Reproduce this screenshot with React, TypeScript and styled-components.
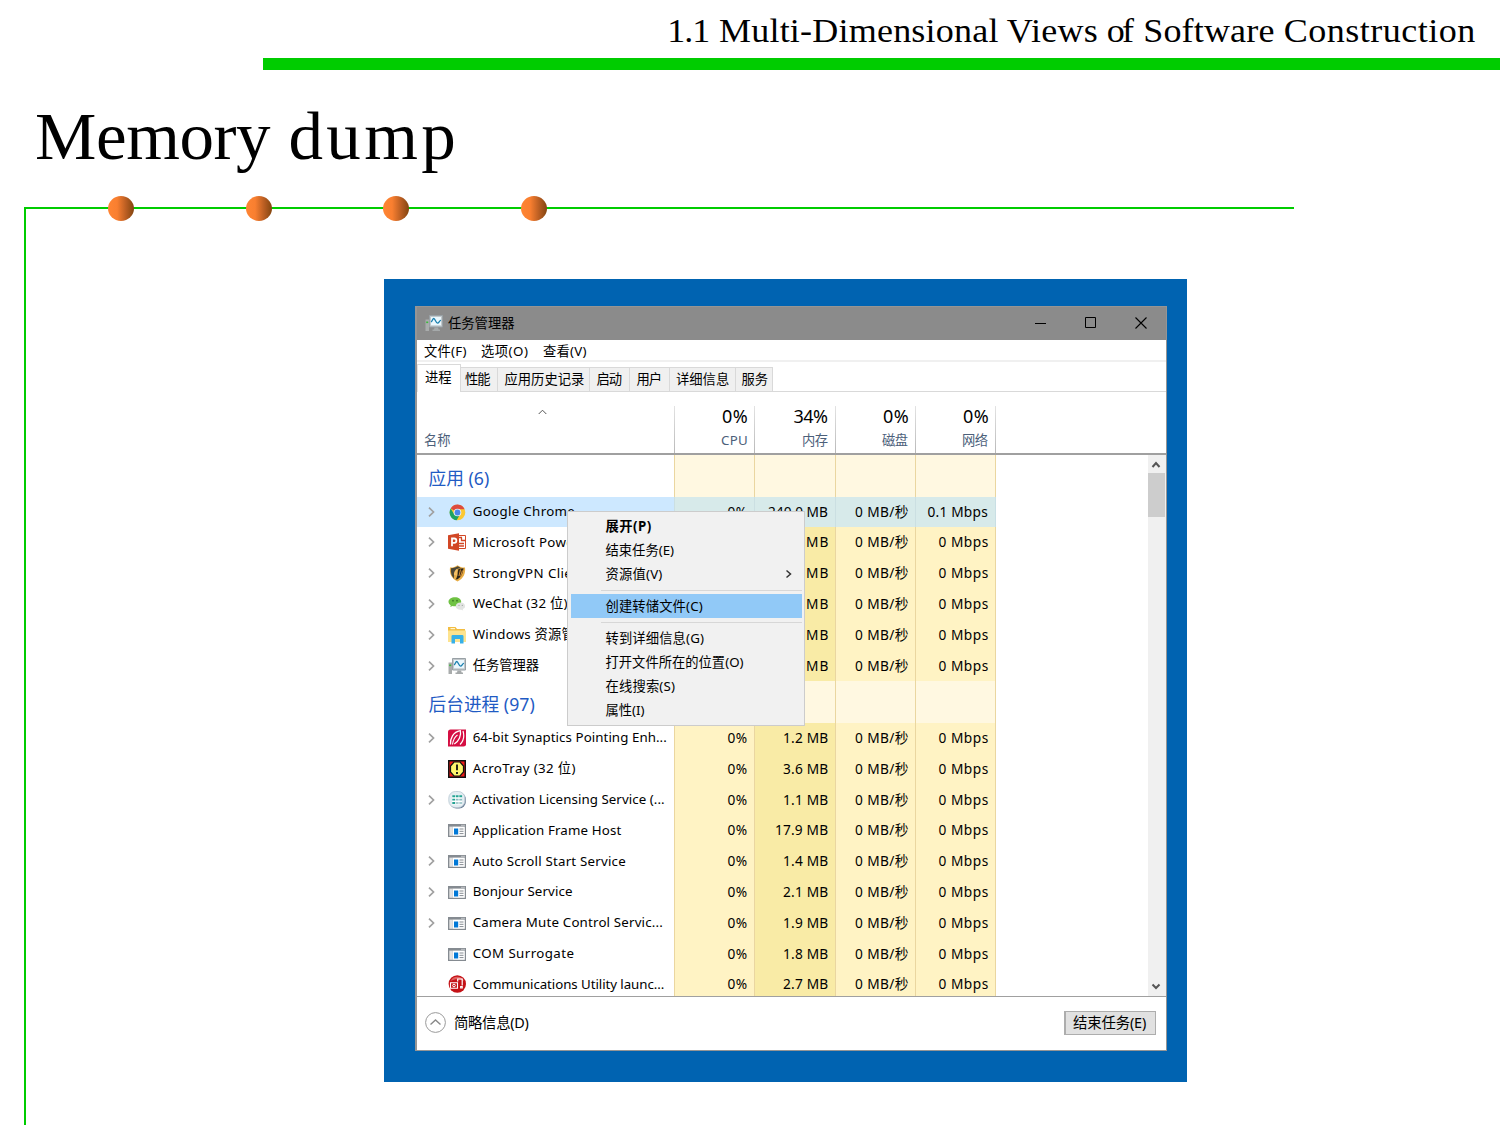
import React, { useLayoutEffect, useRef, useState } from 'react';
import styled, { createGlobalStyle, css } from 'styled-components';

const GlobalStyle = createGlobalStyle`
  * { box-sizing: border-box; }
  body { margin: 0; background: #fff; }
`;

const uiFont = '"Noto Sans", "Open Sans", "Noto Sans CJK SC", sans-serif';
const green = '#00cc00';

/* Text tracked so that it fills a given width. */
const FitBox = styled.span<{ $w: number }>`
  display: inline-block;
  flex: none;
  width: ${(p) => p.$w}px;
  white-space: pre;
  text-align: left;
`;

function Fit({ w, children }: { w: number; children: string }) {
  const ref = useRef<HTMLSpanElement>(null);
  const [spacing, setSpacing] = useState(0);
  useLayoutEffect(() => {
    const el = ref.current!;
    const applied = parseFloat(getComputedStyle(el).letterSpacing) || 0;
    const natural = el.offsetWidth - applied * children.length;
    setSpacing((w - natural) / Math.max(1, children.length - 1));
  }, [w, children]);
  return (
    <FitBox $w={w}>
      <span ref={ref} style={{ letterSpacing: spacing }}>{children}</span>
    </FitBox>
  );
}

const Slide = styled.div`
  width: 1500px;
  height: 1125px;
  overflow: hidden;
  display: flex;
  flex-direction: column;
  background: #fff;
  color: #000;
  font-family: 'Liberation Serif', serif;
`;

const Chapter = styled.header`
  height: 70px;
  margin-left: 263px;
  padding: 3px 25px 0 0;
  border-bottom: 12px solid ${green};
  text-align: right;
  font-size: 34.5px;
  line-height: 55px;
`;

const Title = styled.h1`
  margin: 0;
  height: 137px;
  padding: 28px 0 0 35px;
  font-size: 67px;
  font-weight: 400;
  line-height: 76px;
`;

const Stretch = styled.span<{ $x: number; $from: string; $gap?: number }>`
  display: inline-flex;
  gap: ${(p) => p.$gap ?? 0}px;
  transform: scaleX(${(p) => p.$x});
  transform-origin: ${(p) => p.$from} center;
`;

const Frame = styled.main`
  position: relative;
  width: 1270px;
  height: 918px;
  margin-left: 24px;
  padding: 70px 0 0 358px;
  border-top: 2px solid ${green};
  border-left: 2px solid ${green};
`;

const Dot = styled.i<{ $x: number }>`
  position: absolute;
  top: -13px;
  left: ${(p) => p.$x}px;
  width: 26px;
  height: 25px;
  border-radius: 50%;
  background: linear-gradient(90deg, #ff8533 0%, #f97f30 35%, #b85d22 70%, #83450f 100%);
`;

const Desktop = styled.section`
  width: 803px;
  height: 803px;
  padding: 27px 20px 31px 31px;
  background: #0063b1;
  font-family: ${uiFont};
  font-size: 13.3px;
`;

const Window = styled.div`
  position: relative;
  width: 752px;
  height: 745px;
  display: flex;
  flex-direction: column;
  background: #fff;
  border: 1px solid #959595;
  border-left-width: 2px;
`;

const TitleBar = styled.div`
  height: 33px;
  flex: none;
  display: flex;
  align-items: center;
  gap: 5px;
  padding: 0 0 2px 8px;
  background: #8b8b8b;
`;

const Controls = styled.div`
  margin-left: auto;
  margin-right: 19.5px;
  display: flex;
  align-items: center;
  gap: 38px;
`;

const MenuBar = styled.div`
  height: 22px;
  flex: none;
  display: flex;
  gap: 15px;
  padding-left: 7px;
  line-height: 22px;
  border-bottom: 2px solid #f0f0f0;
`;

const Tabs = styled.div`
  height: 30px;
  flex: none;
  display: flex;
  align-items: flex-end;
  border-bottom: 1px solid #d9d9d9;
`;

const Tab = styled.div<{ $w: number; $pad?: number; $active?: boolean }>`
  width: ${(p) => p.$w}px;
  height: 24px;
  padding-left: ${(p) => p.$pad ?? 7}px;
  line-height: 22px;
  background: #f0f0f0;
  border-top: 1px solid #d9d9d9;
  border-right: 1px solid #d9d9d9;
  ${(p) =>
    p.$active &&
    css`
      height: 28px;
      margin-bottom: -1px;
      border-left: 1px solid #e3e3e3;
      line-height: 25px;
      background: #fff;
    `}
`;

const columns = '257px 80px 81px 80px 80px 1px';

const ColumnHead = styled.div`
  height: 63px;
  flex: none;
  display: grid;
  grid-template-columns: ${columns};
  padding-top: 14px;
  border-bottom: 2px solid #a0a0a0;
`;

const NameHead = styled.div`
  display: flex;
  flex-direction: column;
  padding-left: 7px;
  color: #4c607a;
  line-height: 20px;
`;

const SortMark = styled.div`
  height: 24px;
  padding: 3px 0 0 114px;
  line-height: 0;
`;

const ValueHead = styled.div`
  display: flex;
  flex-direction: column;
  align-items: flex-end;
  padding-right: 6.5px;
  border-left: 1px solid;
  border-image: linear-gradient(#e4e4e4, #b8b8b8) 1;
  color: #4c607a;
  line-height: 22px;
`;

const Total = styled.div`
  height: 23px;
  color: #000;
  font-size: 18px;
  line-height: 20px;
`;

const Body = styled.div`
  height: 541px;
  flex: none;
  display: flex;
  overflow: hidden;
`;

const List = styled.div`
  flex: 1;
`;

const GroupRow = styled.div`
  height: 41.6px;
  display: grid;
  grid-template-columns: ${columns};
`;

const GroupName = styled.div`
  padding: 3.5px 0 0 11.5px;
  color: #1f5bc4;
  font-size: 17.7px;
  line-height: 38px;
`;

const GroupCell = styled.div`
  background: #fff8e1;
  border-left: 1px solid #ead6a0;
`;

const Edge = styled.div<{ $pale?: boolean }>`
  background: ${(p) => (p.$pale ? '#c9dfe4' : '#ead6a0')};
`;

const ProcessRow = styled.div<{ $selected?: boolean }>`
  height: 30.8px;
  display: grid;
  grid-template-columns: ${columns};
  line-height: 29px;
  background: ${(p) => (p.$selected ? 'linear-gradient(90deg, #cde8ff 257px, #d7eaea 257px 579px, #fff 579px)' : '#fff')};
`;

const NameCell = styled.div`
  height: 30px;
  display: grid;
  grid-template-columns: 20px 25px 1fr;
  align-items: center;
  padding: 0 0 0 10.7px;
  overflow: hidden;
  svg { display: block; }
`;

const Cell = styled.div<{ $hot?: boolean; $selected?: boolean }>`
  padding-right: 7px;
  text-align: right;
  font-size: 13.7px;
  border-left: 1px solid ${(p) => (p.$selected ? '#cbdfe2' : '#ead6a0')};
  background: ${(p) => (p.$selected ? '#d7eaea' : p.$hot ? '#f9eba6' : '#fff3c4')};
`;

const Scrollbar = styled.div`
  width: 18px;
  display: flex;
  flex-direction: column;
  align-items: center;
  background: #f0f0f0;
  svg { display: block; flex: none; }
`;

const Thumb = styled.div`
  width: 17px;
  height: 44px;
  margin-bottom: auto;
  align-self: flex-start;
  background: #cdcdcd;
`;

const Footer = styled.div`
  flex: 1;
  display: flex;
  align-items: center;
  gap: 8px;
  padding: 0 10px 2px 8px;
  border-top: 1px solid #a0a0a0;
  font-size: 14.4px;
  line-height: 18px;
  svg { display: block; }
`;

const EndTask = styled.button`
  width: 92px;
  height: 24px;
  margin: 0 0 0 auto;
  padding: 0 0 0 7px;
  border: 1px solid #adadad;
  border-left-width: 2px;
  background: #e1e1e1;
  color: #000;
  font-family: ${uiFont};
  font-size: 14.4px;
  line-height: 20px;
  text-align: left;
`;

const ContextMenu = styled.div`
  position: absolute;
  left: 150px;
  top: 204px;
  width: 238px;
  height: 215px;
  padding: 2px 2px 3px 3px;
  border: 1px solid #ccc;
  background: #f1f1f1;
`;

const MenuItem = styled.div<{ $lit?: boolean; $bold?: boolean }>`
  height: 24px;
  display: flex;
  align-items: center;
  justify-content: space-between;
  padding: 0 9px 0 34.5px;
  line-height: 24px;
  font-weight: ${(p) => (p.$bold ? 700 : 400)};
  background: ${(p) => (p.$lit ? '#91c9f7' : 'transparent')};
`;

const Divider = styled.hr`
  height: 1px;
  margin: 4px 0 3px 30px;
  border: 0;
  background: #d7d7d7;
`;

type IconName =
  | 'chrome' | 'ppt' | 'vpn' | 'wechat' | 'folder' | 'taskmgr'
  | 'synaptics' | 'acro' | 'licence' | 'app' | 'comm';

const art: Record<IconName, React.ReactNode> = {
  chrome: (
    <>
      <circle cx="9.5" cy="9.5" r="7.8" fill="#fbc832" />
      <path d="M9.5 9.5 2.7 5.5A7.8 7.8 0 0 1 16.6 6.2H9.5Z" fill="#dd4b3e" />
      <path d="M2.7 5.5a7.8 7.8 0 0 0 6 11.8l3.5-6.2L6.3 11.5Z" fill="#1da362" />
      <circle cx="9.5" cy="9.5" r="3.8" fill="#f2f2f2" />
      <circle cx="9.5" cy="9.5" r="2.9" fill="#4a86e8" />
    </>
  ),
  ppt: (
    <>
      <path d="M10 2.5h7.5v13H10Z" fill="#fff" stroke="#d24726" />
      <path d="M11 4.5h3M13.5 4.5v3h3.5M11 10.5h5M11 13h5" fill="none" stroke="#d24726" strokeWidth="1.3" />
      <path d="M0 2.3 11 .3v17.4L0 15.7Z" fill="#d24726" />
      <path d="M4 13.2V5.5h2.2a2.1 2.1 0 0 1 0 4.3H4.2" fill="none" stroke="#fff" strokeWidth="1.8" />
    </>
  ),
  vpn: (
    <>
      <path d="M2 3.5c3 .2 5-.8 7.5-2.3 2.5 1.5 4.5 2.5 7.5 2.3.8 6-1.5 11-7.5 14C3.5 14.5 1.2 9.5 2 3.5Z" fill="#e8ad45" />
      <path d="M3 4.3C6 4.3 8 3.2 9.5 2.3l3 1.2C8 5 6 8 6 14.5 3.5 12 2.5 9 3 4.3Z" fill="#4b4738" />
      <path d="M10.5 5c2-1 3.5-.3 5-.7-.5 5-2 8.5-6 11l-2 .2c2.5-2.5 1-5 3-10.5Z" fill="#2b2417" />
      <path d="M6 11.5c-.5-3 1-5.5 3.3-7-.4 3 .7 4-.2 8-.8-2-1.9-1.5-3.1-1Z" fill="#f4bf62" />
      <path d="M12.5 5.5 11 12M14.5 6.5l-2 6" stroke="#d08a32" strokeWidth="1.1" />
    </>
  ),
  wechat: (
    <>
      <path d="M7 2.3c-3.7 0-6.5 2-6.5 4.5 0 1.5.8 2.7 2.2 3.4L2.3 12l2.2-1c3 .8 8.5 0 8.7-4.2C13.2 4.2 10.5 2.3 7 2.3Z" fill="#6fc243" />
      <circle cx="5" cy="5.7" r=".9" fill="#3e7b25" />
      <circle cx="9" cy="5.7" r=".9" fill="#3e7b25" />
      <path d="M12.7 7.5c-3 0-5 1.6-5 3.7s2.5 3.7 5.5 3.5l2 .9-.4-1.5c1.5-.8 2.3-1.6 2.3-2.9C17.1 9.1 15.3 7.5 12.7 7.5Z" fill="#e2e4e2" />
      <circle cx="11" cy="10.3" r=".6" fill="#999" />
      <circle cx="14.3" cy="10.3" r=".6" fill="#999" />
    </>
  ),
  folder: (
    <>
      <path d="M0 1h7.5l1.5 2H17v3H0Z" fill="#f2bd42" />
      <path d="M2.5 2h4.5v1.2H2.5Z" fill="#fff4ce" />
      <path d="M0 4.5h18V16H0Z" fill="#fde38f" />
      <path d="M3.5 17.5V10.3q0-1.3 1.3-1.3h9.4q1.3 0 1.3 1.3v7.2H12V13H7v4.5Z" fill="#37b0e8" />
    </>
  ),
  taskmgr: (
    <>
      <path d="M.5 5.5h3.5V17H.5Z" fill="#a9acac" />
      <path d="M1.2 7.5h2v1.6h-2Z" fill="#3cb93c" />
      <path d="M4.5 1.5h13V13h-13Z" fill="#c2c8cb" stroke="#98a0a5" />
      <path d="M6 3h10v8.3H6Z" fill="#eaf7fd" />
      <path d="M6 8c1.5-.5 1.5-3.5 2.8-3.5S11 9.2 12.5 9.2 14.5 6 16 6.5" fill="none" stroke="#1a7fae" strokeWidth="1.3" />
      <path d="M9.5 13.5h3.5l.7 2H15v1.4H7.5v-1.4H9Z" fill="#a5a9aa" />
    </>
  ),
  synaptics: (
    <>
      <path d="M2.5.5H18v15q0 2-2.5 2H0V3Q0 .5 2.5.5Z" fill="#d50f43" />
      <path d="M2.5 15.5C2 9.5 5 3 12.3 1.7c1.2 4.5-1.3 10.3-6 13.3" fill="none" stroke="#fff" strokeWidth="1.3" />
      <path d="M4.5 15.5C5 11.5 6.5 8 9.5 6" fill="none" stroke="#fff" strokeWidth="1.1" />
      <path d="M15 2c1.5 5 1 9.5-3 13.5" fill="none" stroke="#fff" strokeWidth="1.2" />
    </>
  ),
  acro: (
    <>
      <path d="M.7.7h16.6v16.6H.7Z" fill="#f41b16" stroke="#111" strokeWidth="1.6" />
      <path d="M6 2h6L15.5 6v6L12 16H6L2.5 12V6Z" fill="#fff56c" stroke="#111" strokeWidth="1.2" />
      <path d="M9 4.5v5.8M9 12v2" stroke="#111" strokeWidth="1.8" />
    </>
  ),
  licence: (
    <>
      <rect x="1.8" y="1.5" width="16" height="16" rx="6.5" fill="#6d8098" />
      <rect x=".8" y=".5" width="16" height="16" rx="6.5" fill="#e4edf2" stroke="#b9c9d3" strokeWidth=".8" />
      <path d="M4 4.5h10v9H4Z" fill="#fff" />
      <path d="M4.3 5.2h2.8m.7 0h2.8m.7 0h2.8M4.3 8.6h2.8M4.3 12h2.8" stroke="#24a393" strokeWidth="1.9" />
      <path d="M7.8 8.6h2.8m.7 0h2.8M7.8 12h2.8m.7 0h2.8" stroke="#8bbcc0" strokeWidth="1.7" />
    </>
  ),
  app: (
    <>
      <path d="M0 3h18v13H0Z" fill="#858b91" />
      <path d="M1.3 5.6h3.2v9.2H1.3Z" fill="#e3e3e3" />
      <path d="M4.5 5.6h12.3v9.2H4.5Z" fill="#fff" />
      <path d="M6 7.5h4.2v6H6Z" fill="#0078d7" />
      <path d="M11.5 8h4M11.5 10.3h4M11.5 12.6h4" stroke="#858b91" />
      <path d="M13.5 4.3h1M15.5 4.3h1" stroke="#fff" />
    </>
  ),
  comm: (
    <>
      <circle cx="9.3" cy="9" r="8.7" fill="#c41217" />
      <path d="M2.5 6a7.5 7.5 0 0 1 13.5 0c-4-2.5-9-2.5-13.5 0Z" fill="#e0605f" />
      <path d="M2.5 7.7h7v5.5h-7Z" fill="none" stroke="#fff" strokeWidth="1.1" />
      <circle cx="6" cy="10.5" r="1.3" fill="none" stroke="#fff" />
      <path d="M9.7 6.5V4h4.5v6.5M12.7 11.5h1.5v1.5h-1.5Z" fill="none" stroke="#fff" strokeWidth="1.2" />
    </>
  ),
};

const Icon = ({ name }: { name: IconName }) => (
  <svg width="18" height="18" viewBox="0 0 18 18">{art[name]}</svg>
);

const Chevron = () => (
  <svg width="7" height="10" viewBox="0 0 7 10">
    <path d="M1 .7 5.5 5 1 9.3" fill="none" stroke="#a0a0a0" strokeWidth="1.7" />
  </svg>
);

interface Proc {
  name: string; w: number; icon: IconName; mem: string; memW: number;
  net?: string; netW?: number; leaf?: boolean; selected?: boolean;
}

const apps: Proc[] = [
  { name: 'Google Chrome', w: 102, icon: 'chrome', mem: '240.0 MB', memW: 60, net: '0.1 Mbps', netW: 60.5, selected: true },
  { name: 'Microsoft Powe', w: 101, icon: 'ppt', mem: 'MB', memW: 22 },
  { name: 'StrongVPN Clie', w: 99, icon: 'vpn', mem: 'MB', memW: 22 },
  { name: 'WeChat (32 位)', w: 95, icon: 'wechat', mem: 'MB', memW: 22 },
  { name: 'Windows 资源管', w: 102, icon: 'folder', mem: 'MB', memW: 22 },
  { name: '任务管理器', w: 66, icon: 'taskmgr', mem: 'MB', memW: 22 },
];

const background: Proc[] = [
  { name: '64-bit Synaptics Pointing Enh...', w: 194, icon: 'synaptics', mem: '1.2 MB', memW: 45 },
  { name: 'AcroTray (32 位)', w: 103, icon: 'acro', mem: '3.6 MB', memW: 45, leaf: true },
  { name: 'Activation Licensing Service (...', w: 192, icon: 'licence', mem: '1.1 MB', memW: 45 },
  { name: 'Application Frame Host', w: 149, icon: 'app', mem: '17.9 MB', memW: 53, leaf: true },
  { name: 'Auto Scroll Start Service', w: 153, icon: 'app', mem: '1.4 MB', memW: 45 },
  { name: 'Bonjour Service', w: 100, icon: 'app', mem: '2.1 MB', memW: 45 },
  { name: 'Camera Mute Control Servic...', w: 190, icon: 'app', mem: '1.9 MB', memW: 45 },
  { name: 'COM Surrogate', w: 101, icon: 'app', mem: '1.8 MB', memW: 45, leaf: true },
  { name: 'Communications Utility launc...', w: 192, icon: 'comm', mem: '2.7 MB', memW: 45, leaf: true },
];

const Process = ({ p }: { p: Proc }) => (
  <ProcessRow $selected={p.selected}>
    <NameCell>
      <span>{!p.leaf && <Chevron />}</span>
      <Icon name={p.icon} />
      <Fit w={p.w}>{p.name}</Fit>
    </NameCell>
    <Cell $selected={p.selected}><Fit w={19.5}>0%</Fit></Cell>
    <Cell $selected={p.selected} $hot><Fit w={p.memW}>{p.mem}</Fit></Cell>
    <Cell $selected={p.selected}><Fit w={53}>0 MB/秒</Fit></Cell>
    <Cell $selected={p.selected}><Fit w={p.netW ?? 49.5}>{p.net ?? '0 Mbps'}</Fit></Cell>
    <Edge $pale={p.selected} />
  </ProcessRow>
);

const Group = ({ title, w }: { title: string; w: number }) => (
  <GroupRow>
    <GroupName><Fit w={w}>{title}</Fit></GroupName>
    <GroupCell /><GroupCell /><GroupCell /><GroupCell /><Edge />
  </GroupRow>
);

const tabs: [string, number, number, number][] = [
  ['性能', 37, 26, 4], ['应用历史记录', 92, 80, 6.5], ['启动', 40, 26, 6.5], ['用户', 40, 26, 6.5], ['详细信息', 66, 53, 6], ['服务', 37, 27, 5.5],
];

const totals: [string, number, string, number][] = [
  ['0%', 25.5, 'CPU', 26.5], ['34%', 35, '内存', 26.5], ['0%', 25.5, '磁盘', 26.5], ['0%', 25.5, '网络', 26.5],
];

const heading: [string, number][] = [
  ['1.1', 41], ['Multi-Dimensional', 267], ['Views', 87], ['of', 26.5], ['Software', 126], ['Construction', 183],
];

export default function App() {
  return (
    <Slide>
      <GlobalStyle />
      <Chapter>
        <Stretch $x={1.045} $from="right" $gap={8.5}>
          {heading.map(([word, w]) => <Fit key={word} w={w}>{word}</Fit>)}
        </Stretch>
      </Chapter>
      <Title>
        <Stretch $x={1.03} $from="left" $gap={17}>
          <Fit w={229}>Memory</Fit>
          <Fit w={163}>dump</Fit>
        </Stretch>
      </Title>
      <Frame>
        {[82, 220, 357, 495].map((x) => <Dot key={x} $x={x} />)}
        <Desktop>
          <Window>
            <TitleBar>
              <Icon name="taskmgr" />
              <Fit w={66}>任务管理器</Fit>
              <Controls>
                <svg width="12" height="12"><path d="M0 6.5h11" stroke="#000" /></svg>
                <svg width="12" height="12"><path d="M.5.5h10v10H.5Z" fill="none" stroke="#000" /></svg>
                <svg width="12" height="12"><path d="m.5.5 11 11m0-11-11 11" stroke="#000" strokeWidth="1.1" /></svg>
              </Controls>
            </TitleBar>
            <MenuBar>
              <Fit w={42}>文件(F)</Fit>
              <Fit w={47}>选项(O)</Fit>
              <Fit w={44}>查看(V)</Fit>
            </MenuBar>
            <Tabs>
              <Tab $w={44} $active><Fit w={27}>进程</Fit></Tab>
              {tabs.map(([label, w, textW, pad]) => (
                <Tab key={label} $w={w} $pad={pad}><Fit w={textW}>{label}</Fit></Tab>
              ))}
            </Tabs>
            <ColumnHead>
              <NameHead>
                <SortMark>
                  <svg width="9" height="6"><path d="M.7 5 4.5 1.2 8.3 5" fill="none" stroke="#555" /></svg>
                </SortMark>
                <Fit w={27}>名称</Fit>
              </NameHead>
              {totals.map(([total, tw, label, lw]) => (
                <ValueHead key={label}>
                  <Total><Fit w={tw}>{total}</Fit></Total>
                  <Fit w={lw}>{label}</Fit>
                </ValueHead>
              ))}
              <ValueHead />
            </ColumnHead>
            <Body>
              <List>
                <Group title="应用 (6)" w={61} />
                {apps.map((p) => <Process key={p.name} p={p} />)}
                <Group title="后台进程 (97)" w={106} />
                {background.map((p) => <Process key={p.name} p={p} />)}
              </List>
              <Scrollbar>
                <svg width="18" height="18"><path d="m4.5 12 3.5-4 3.5 4" fill="none" stroke="#555" strokeWidth="2" /></svg>
                <Thumb />
                <svg width="18" height="18"><path d="m4.5 6.5 3.5 3.5 3.5-3.5" fill="none" stroke="#555" strokeWidth="2" /></svg>
              </Scrollbar>
            </Body>
            <Footer>
              <svg width="21" height="21" viewBox="0 0 21 21">
                <circle cx="10.5" cy="10.5" r="9.9" fill="none" stroke="#999" />
                <path d="m5.5 12.5 5-4.5 5 4.5" fill="none" stroke="#888" strokeWidth="1.4" />
              </svg>
              <Fit w={75}>简略信息(D)</Fit>
              <EndTask><Fit w={73}>结束任务(E)</Fit></EndTask>
            </Footer>
            <ContextMenu>
              <MenuItem $bold><Fit w={46}>展开(P)</Fit></MenuItem>
              <MenuItem><Fit w={69}>结束任务(E)</Fit></MenuItem>
              <MenuItem>
                <Fit w={57}>资源值(V)</Fit>
                <svg width="8" height="10"><path d="M1.5 1.5 5.5 5 1.5 8.5" fill="none" stroke="#333" strokeWidth="1.5" /></svg>
              </MenuItem>
              <Divider />
              <MenuItem $lit><Fit w={97}>创建转储文件(C)</Fit></MenuItem>
              <Divider />
              <MenuItem><Fit w={98}>转到详细信息(G)</Fit></MenuItem>
              <MenuItem><Fit w={138}>打开文件所在的位置(O)</Fit></MenuItem>
              <MenuItem><Fit w={69}>在线搜索(S)</Fit></MenuItem>
              <MenuItem><Fit w={39}>属性(I)</Fit></MenuItem>
            </ContextMenu>
          </Window>
        </Desktop>
      </Frame>
    </Slide>
  );
}
